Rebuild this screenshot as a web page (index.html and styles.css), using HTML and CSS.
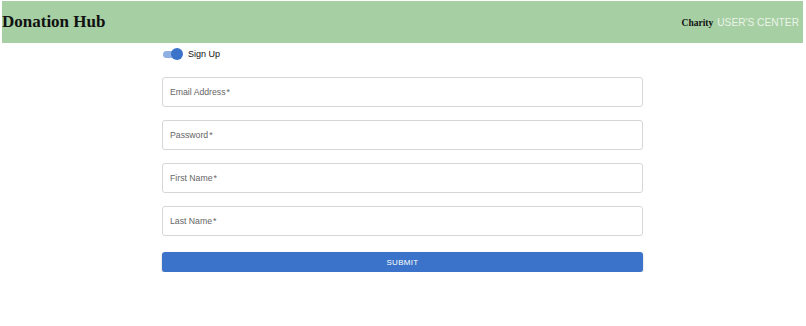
FILE: index.html
```html
<!DOCTYPE html>
<html lang="en">
<head>
    <meta charset="UTF-8">
    <meta name="viewport" content="width=device-width, initial-scale=1.0">
    <title>Donation Hub</title>
    <link rel="stylesheet" href="styles.css">
</head>
<body>
    <header class="header">
        <h1 class="brand">Donation Hub</h1>
        <nav class="nav">
            <span class="nav-charity">Charity</span>
            <span class="nav-center">USER'S CENTER</span>
        </nav>
    </header>

    <main class="form-wrap">
        <label class="switch">
            <span class="switch-track"><span class="switch-thumb"></span></span>
            <span class="switch-label">Sign Up</span>
        </label>

        <form class="form">
            <div class="field"><span class="field-label">Email Address<span class="req">*</span></span></div>
            <div class="field"><span class="field-label">Password<span class="req">*</span></span></div>
            <div class="field"><span class="field-label">First Name<span class="req">*</span></span></div>
            <div class="field"><span class="field-label">Last Name<span class="req">*</span></span></div>
            <button type="button" class="submit">SUBMIT</button>
        </form>
    </main>
</body>
</html>
```

FILE: styles.css
```css
body {
    margin: 0;
    padding: 1px 3px 0 2px;
    background-color: #fff;
    font-family: 'Liberation Sans', Arial, sans-serif;
}

/* header */
.header {
    height: 42px;
    background-color: #a6cfa3;
    display: flex;
    align-items: center;
    justify-content: space-between;
    padding: 0 4px 0 0;
}
.brand {
    margin: 0;
    font-family: 'Liberation Serif', 'Times New Roman', serif;
    font-size: 17px;
    font-weight: bold;
    color: #111;
}
.nav {
    display: flex;
    align-items: baseline;
    gap: 4px;
}
.nav-charity {
    font-family: 'Liberation Serif', 'Times New Roman', serif;
    font-size: 9.5px;
    font-weight: bold;
    color: #111;
}
.nav-center {
    font-size: 10.2px;
    color: #eaf4e8;
}

/* form */
.form-wrap {
    width: 481px;
    margin: 0 auto;
}
.switch {
    display: flex;
    align-items: center;
    height: 20px;
    margin-top: 1px;
}
.switch-track {
    position: relative;
    width: 18px;
    height: 7px;
    border-radius: 4px;
    background-color: #8fb0e3;
    margin-left: 1px;
}
.switch-thumb {
    position: absolute;
    right: -2px;
    top: -2.5px;
    width: 12px;
    height: 12px;
    border-radius: 50%;
    background-color: #3a73c9;
}
.switch-label {
    margin-left: 7px;
    font-size: 9px;
    color: #111;
}
.form {
    display: flex;
    flex-direction: column;
    gap: 13px;
    margin-top: 13px;
}
.field {
    height: 28px;
    border: 1px solid #d6d6d6;
    border-radius: 3px;
    display: flex;
    align-items: center;
    padding-left: 7px;
}
.field-label {
    font-size: 8.7px;
    color: #666;
}
.req {
    margin-left: 1px;
}
.submit {
    margin-top: 3px;
    height: 20px;
    border: none;
    border-radius: 3px;
    background-color: #3a73c9;
    color: #fff;
    font-family: 'Liberation Sans', Arial, sans-serif;
    font-size: 8px;
    letter-spacing: 0.3px;
    box-shadow: 0 1px 2px rgba(0, 0, 0, 0.25);
}
```
